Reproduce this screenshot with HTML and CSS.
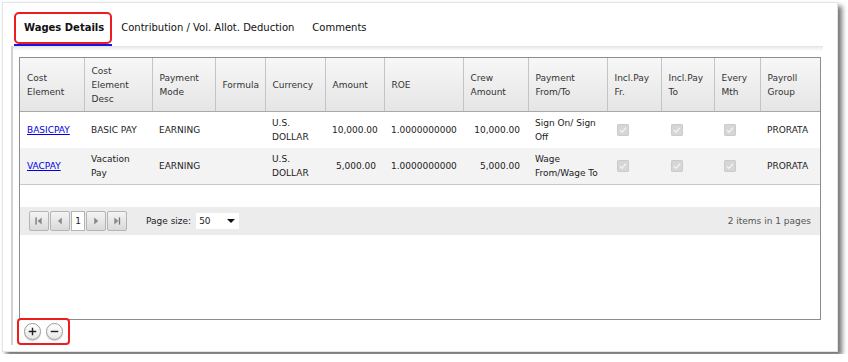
FILE: index.html
```html
<!DOCTYPE html>
<html lang="en">
<head>
    <meta charset="UTF-8">
    <title>Wages Details</title>
    <link rel="stylesheet" href="styles.css">
</head>
<body>
    <div class="panel">
        <div class="tabs">
            <div class="tab active"><span class="tab-label">Wages Details</span></div>
            <div class="tab"><span class="tab-label">Contribution / Vol. Allot. Deduction</span></div>
            <div class="tab"><span class="tab-label">Comments</span></div>
        </div>
        <div class="tab-body">
            <div class="grid">
                <table>
                    <colgroup>
                        <col style="width:64px"><col style="width:68px"><col style="width:63px">
                        <col style="width:50px"><col style="width:60px"><col style="width:59px">
                        <col style="width:79px"><col style="width:65px"><col style="width:79px">
                        <col style="width:54px"><col style="width:53px"><col style="width:46px">
                        <col style="width:60px">
                    </colgroup>
                    <thead>
                        <tr>
                            <th>Cost Element</th>
                            <th>Cost Element Desc</th>
                            <th>Payment Mode</th>
                            <th>Formula</th>
                            <th>Currency</th>
                            <th>Amount</th>
                            <th>ROE</th>
                            <th>Crew Amount</th>
                            <th>Payment From/To</th>
                            <th>Incl.Pay Fr.</th>
                            <th>Incl.Pay To</th>
                            <th>Every Mth</th>
                            <th>Payroll Group</th>
                        </tr>
                    </thead>
                    <tbody>
                        <tr>
                            <td><a href="#">BASICPAY</a></td>
                            <td>BASIC PAY</td>
                            <td>EARNING</td>
                            <td></td>
                            <td>U.S. DOLLAR</td>
                            <td class="num">10,000.00</td>
                            <td>1.0000000000</td>
                            <td class="num">10,000.00</td>
                            <td>Sign On/ Sign Off</td>
                            <td><span class="chk"><svg viewBox="0 0 12 12" width="12" height="12"><path d="M3 6.2l2 2 4-4.4" fill="none" stroke="#f2f2f2" stroke-width="1.4"/></svg></span></td>
                            <td><span class="chk"><svg viewBox="0 0 12 12" width="12" height="12"><path d="M3 6.2l2 2 4-4.4" fill="none" stroke="#f2f2f2" stroke-width="1.4"/></svg></span></td>
                            <td><span class="chk"><svg viewBox="0 0 12 12" width="12" height="12"><path d="M3 6.2l2 2 4-4.4" fill="none" stroke="#f2f2f2" stroke-width="1.4"/></svg></span></td>
                            <td>PRORATA</td>
                        </tr>
                        <tr class="alt">
                            <td><a href="#">VACPAY</a></td>
                            <td>Vacation Pay</td>
                            <td>EARNING</td>
                            <td></td>
                            <td>U.S. DOLLAR</td>
                            <td class="num">5,000.00</td>
                            <td>1.0000000000</td>
                            <td class="num">5,000.00</td>
                            <td>Wage From/Wage To</td>
                            <td><span class="chk"><svg viewBox="0 0 12 12" width="12" height="12"><path d="M3 6.2l2 2 4-4.4" fill="none" stroke="#f2f2f2" stroke-width="1.4"/></svg></span></td>
                            <td><span class="chk"><svg viewBox="0 0 12 12" width="12" height="12"><path d="M3 6.2l2 2 4-4.4" fill="none" stroke="#f2f2f2" stroke-width="1.4"/></svg></span></td>
                            <td><span class="chk"><svg viewBox="0 0 12 12" width="12" height="12"><path d="M3 6.2l2 2 4-4.4" fill="none" stroke="#f2f2f2" stroke-width="1.4"/></svg></span></td>
                            <td>PRORATA</td>
                        </tr>
                    </tbody>
                </table>

                <div class="pager">
                    <div class="pager-nav">
                        <span class="pg-btn"><svg viewBox="0 0 20 20" width="18" height="18"><rect x="6" y="6" width="1.5" height="8" fill="#777"/><path d="M13 6v8l-4.5-4z" fill="#888"/></svg></span>
                        <span class="pg-btn"><svg viewBox="0 0 20 20" width="17" height="18"><path d="M11.5 6v8L7 10z" fill="#888"/></svg></span>
                        <span class="pg-num">1</span>
                        <span class="pg-btn"><svg viewBox="0 0 20 20" width="18" height="18"><path d="M8 6v8l4.5-4z" fill="#888"/></svg></span>
                        <span class="pg-btn"><svg viewBox="0 0 20 20" width="18" height="18"><path d="M7 6v8l4.5-4z" fill="#888"/><rect x="12" y="6" width="1.5" height="8" fill="#777"/></svg></span>
                    </div>
                    <span class="pg-label">Page size:</span>
                    <span class="pg-size">50<span class="caret"></span></span>
                    <span class="pg-info">2 items in 1 pages</span>
                </div>
            </div>

            <div class="grid-actions">
                <span class="round-btn">
                    <svg viewBox="0 0 16 16" width="16" height="16"><path d="M4 8h8M8 4v8" stroke="#222" stroke-width="1.5"/></svg>
                </span>
                <span class="round-btn">
                    <svg viewBox="0 0 16 16" width="16" height="16"><path d="M4 8h8" stroke="#222" stroke-width="1.5"/></svg>
                </span>
            </div>
        </div>
    </div>
</body>
</html>
```

FILE: styles.css
```css
body {
    margin: 0;
    padding: 2px;
    background-color: white;
    font-family: "DejaVu Sans", Verdana, sans-serif;
    font-size: 9px;
    color: #222;
}
.panel {
    box-sizing: border-box;
    width: 836px;
    height: 350px;
    padding: 9px 0 0 8px;
    border: 1px solid #e4e4e4;
    background-color: white;
    box-shadow: 4px 4px 5px rgba(0,0,0,0.55);
}

/* tabs */
.tabs {
    display: flex;
    margin-left: 3px;
    font-size: 10px;
}
.tab {
    display: flex;
}
.tab-label {
    display: flex;
    align-items: center;
    height: 31px;
    padding: 0 9px;
    color: #111;
}
.tab.active {
    border-bottom: 2px solid #1414e6;
}
.tab.active .tab-label {
    box-sizing: border-box;
    height: 32px;
    padding: 0 6px 1px 8px;
    border: 2px solid #ee1c1c;
    border-radius: 5px;
    font-weight: bold;
}
.tab-body {
    box-sizing: border-box;
    width: 812px;
    height: 299px;
    padding: 11px 0 0 6px;
    border-left: 2px solid #d2d2d2;
    background: linear-gradient(#e4e4e4, #ffffff 5px) no-repeat;
    background-size: 100% 6px;
}

/* grid */
.grid {
    box-sizing: border-box;
    width: 802px;
    height: 263px;
    border: 1px solid #8c8c8c;
}
table {
    width: 800px;
    border-collapse: collapse;
    table-layout: fixed;
}
th {
    height: 52px;
    padding: 1px 7px 0;
    border-left: 1px solid #c4c4c4;
    border-bottom: 1px solid #a8a8a8;
    background: linear-gradient(#f7f7f7, #e5e5e5);
    font-weight: normal;
    text-align: left;
    line-height: 14px;
    color: #333;
}
th:first-child {
    border-left: none;
}
td {
    height: 36px;
    padding: 0 7px;
    line-height: 14px;
    vertical-align: middle;
}
tbody tr:last-child td {
    border-bottom: 1px solid #c8c8c8;
}
tr.alt {
    background-color: #f3f3f3;
}
td.num {
    text-align: right;
    padding-right: 8px;
}
td a {
    color: #0000e0;
}
.chk {
    display: inline-block;
    width: 12px;
    height: 12px;
    margin: 3px 0 0 3px;
    border-radius: 2px;
    background-color: #d6d6d6;
    box-shadow: inset 0 0 0 1px #cbcbcb;
}
.chk svg {
    display: block;
}

/* pager */
.pager {
    display: flex;
    align-items: center;
    height: 28px;
    margin-top: 22px;
    padding: 0 9px;
    background-color: #ececec;
}
.pager-nav {
    display: flex;
    gap: 1px;
}
.pg-btn {
    box-sizing: border-box;
    display: flex;
    align-items: center;
    justify-content: center;
    width: 20px;
    height: 20px;
    border: 1px solid #b4b4b4;
    border-radius: 2px;
    background: linear-gradient(#f4f4f4, #d9d9d9);
}
.pg-num {
    box-sizing: border-box;
    width: 14px;
    height: 20px;
    line-height: 18px;
    text-align: center;
    border: 1px solid #b4b4b4;
    background-color: white;
}
.pg-label {
    margin-left: 19px;
    color: #222;
}
.pg-size {
    display: flex;
    align-items: center;
    box-sizing: border-box;
    width: 43px;
    height: 16px;
    margin-left: 5px;
    padding-left: 3px;
    background-color: white;
}
.caret {
    margin-left: auto;
    margin-right: 4px;
    border-left: 4px solid transparent;
    border-right: 4px solid transparent;
    border-top: 4px solid #111;
}
.pg-info {
    margin-left: auto;
    color: #555;
}

/* add / remove row */
.grid-actions {
    box-sizing: border-box;
    display: flex;
    align-items: center;
    gap: 5px;
    width: 53px;
    height: 27px;
    margin: -2px 0 0 -2px;
    padding-left: 5px;
    border: 2px solid #ee1c1c;
    border-radius: 4px;
}
.round-btn {
    box-sizing: border-box;
    display: flex;
    width: 17px;
    height: 17px;
    border: 1px solid #9a9a9a;
    border-radius: 50%;
    background: linear-gradient(#ffffff, #e8e8e8);
    box-shadow: 0 1px 1px rgba(0,0,0,0.2);
}
.round-btn svg {
    margin: auto;
    width: 15px;
    height: 15px;
}
```
